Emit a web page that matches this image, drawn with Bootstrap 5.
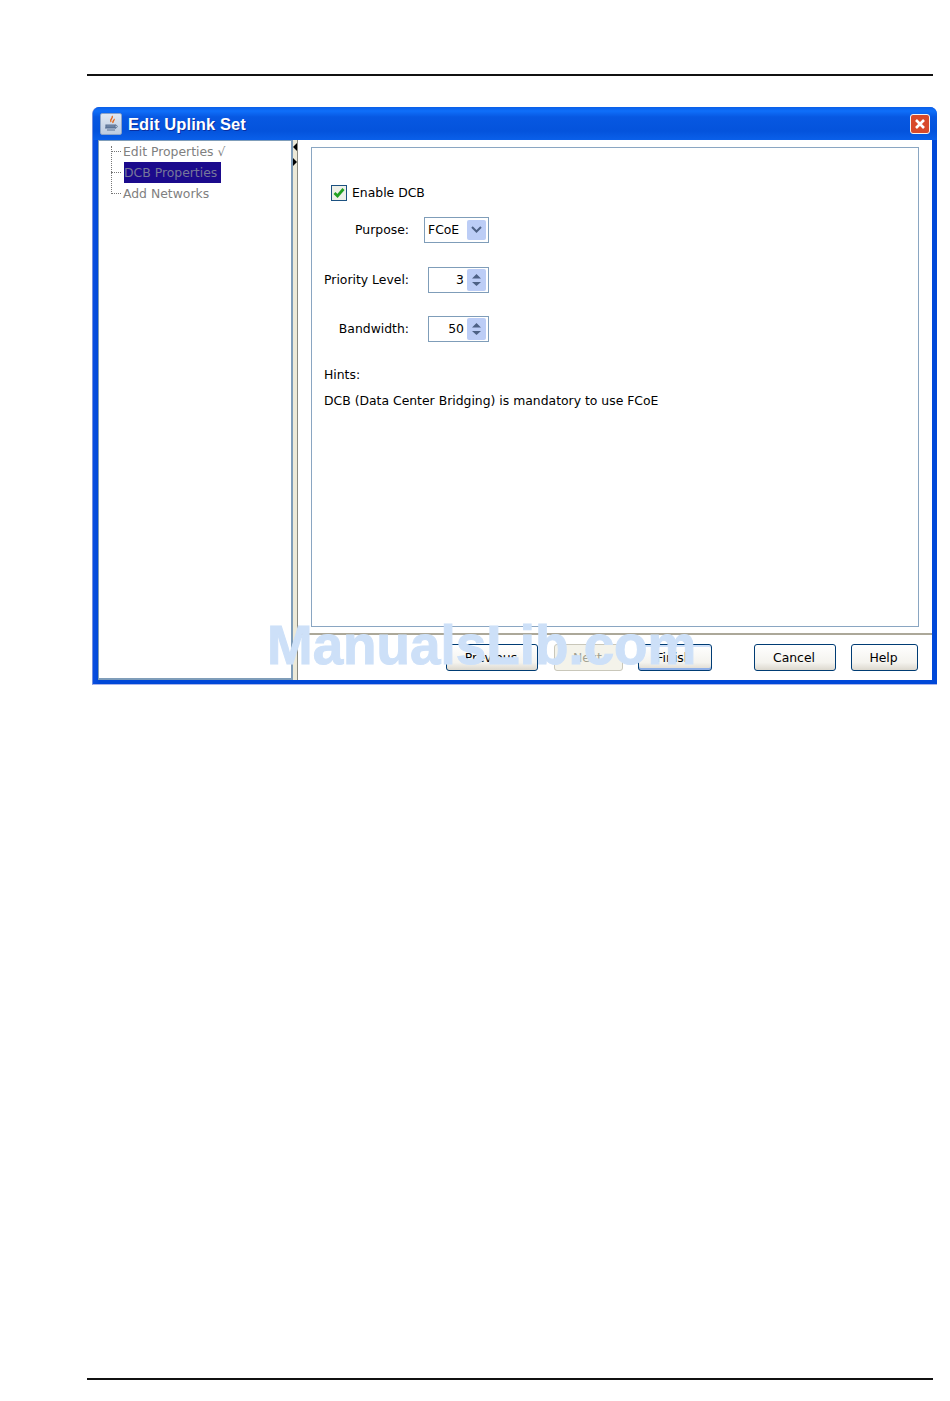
<!DOCTYPE html>
<html lang="en">
<head>
<meta charset="utf-8">
<title>Edit Uplink Set</title>
<link href="https://cdn.jsdelivr.net/npm/bootstrap@5.3.0/dist/css/bootstrap.min.css" rel="stylesheet">
<style>
html,body{margin:0;background:#fff;}
.sheet{width:950px;height:1401px;padding:74px 17px 0 87px;font-family:"DejaVu Sans",sans-serif;font-size:12.4px;color:#000;position:relative;overflow:hidden;}
.rule-line{height:2px;background:#111;width:846px;}
.rule-top{margin-bottom:31px;}
.rule-bottom{margin-top:693px;}
.xp-win{margin-left:5px;width:845px;height:578px;background:#0a50e0;border-radius:7px 7px 0 0;display:flex;flex-direction:column;border-bottom:1px solid #a9b4ea;border-left:1px solid #6f8fe0;}
.xp-title{height:33px;flex:none;background:linear-gradient(#0a5fe8 0,#0f6ffa 4px,#0758e2 10px,#0453dc 24px,#0a60ea 33px);border-radius:7px 7px 0 0;padding:1px 7px 0 7px;color:#fff;font-family:"Liberation Sans",sans-serif;font-weight:700;font-size:16.5px;letter-spacing:.1px;text-shadow:1px 1px 0 #0a2ea0;}
.title-icon{width:22px;height:22px;margin-right:6px;background:linear-gradient(#dfe8f2,#bccbe0);border:1px solid #8aa3c8;border-radius:2px;}
.title-text{padding-top:1px;}
.close-x{width:20px;height:20px;background:#d8492a;border:1px solid #f3f3f3;border-radius:3px;}
.xp-main{flex:1;min-height:0;padding:0 5px 4px 5px;background:linear-gradient(90deg,#0a4fe0,#0048d8 6px,#0048d8);}
.tree-pane{width:195px;background:#fff;border:solid #7f9db9;border-width:1px 2px 2px 1px;padding:0 0 0 12px;position:relative;color:#808080;}
.tree-row{height:21px;line-height:21px;white-space:nowrap;position:relative;padding-left:12px;}
.tree-row::before{content:"";position:absolute;left:0;top:10px;width:10px;border-top:1px dotted #777;}
.tree-stem{position:absolute;left:12px;top:5px;height:46px;border-left:1px dotted #777;}
.tree-sel{background:#1b0a8c;color:#77779a;display:inline-block;height:21px;line-height:21px;width:97px;margin-left:1px;vertical-align:top;}
.splitter{width:5px;background:#ece9d8;border-right:1px solid #8a8a80;position:relative;}
.tri-l{position:absolute;left:0;top:3px;width:0;height:0;border:4px solid transparent;border-left-width:0;border-right:4px solid #000;}
.tri-r{position:absolute;left:0;top:18px;width:0;height:0;border:4px solid transparent;border-right-width:0;border-left:4px solid #000;}
.right-pane{flex:1;background:#fff;display:flex;flex-direction:column;min-width:0;}
.content-wrap{height:493px;padding:7px 13px 6px 13px;flex:none;}
.group-box{height:480px;border:1px solid #8aa6c2;padding:37px 0 0 12px;}
.chk-row{height:16px;margin-left:7px;margin-bottom:16px;}
.chk-box{width:16px;height:16px;border:1px solid #1c5180;background:#eef0e8;margin-right:5px;}
.field-label{width:86px;text-align:right;margin-right:15px;flex:none;white-space:nowrap;}
.field-row{display:flex;align-items:center;height:26px;margin-left:-1px;}
.gap-a{margin-bottom:24px;}
.gap-b{margin-bottom:23px;}
.combo,.spin{height:26px;border:1px solid #7f9db9;background:#fff;display:flex;align-items:center;justify-content:space-between;padding:2px 2px 2px 3px;}
.combo{width:65px;}
.spin{width:61px;margin-left:4px;padding-left:0;}
.spin-val{flex:1;text-align:right;padding-right:3px;}
.arrow-cell{width:19px;height:20px;background:#bccdf6;border-radius:2px;display:flex;align-items:center;justify-content:center;}
.arrow-cell.tall{height:22px;}
.hint-a{margin:24px 0 0 0;line-height:18px;}
.hint-b{margin:8px 0 0 0;line-height:18px;white-space:nowrap;}
.divider-line{height:2px;background:#aca899;flex:none;}
.btn-bar{flex:1;padding:9px 14px 0 148px;}
.xp-btn{height:27px;padding:0 2px 0 0;font-family:"DejaVu Sans",sans-serif;font-size:12.4px;line-height:25px;color:#000;background:linear-gradient(#fff,#f4f3ee 70%,#dcd8ce);border:1px solid #003c74;border-radius:3px;}
.xp-btn.w-prev{width:92px;margin-right:16px;}
.xp-btn.w-next{width:69px;margin-right:15px;color:#a1a192;background:#f4f3ea;border-color:#c9c7ba;opacity:1;}
.xp-btn.w-fin{width:74px;margin-right:42px;box-shadow:inset 0 -2px 0 #8fb0e8,inset 0 2px 0 #cfe0f8;}
.xp-btn.w-can{width:82px;margin-right:15px;}
.xp-btn.w-help{width:67px;}
.stamp{position:absolute;left:267px;top:612px;font-family:"Liberation Sans",sans-serif;font-weight:700;font-size:54.8px;line-height:66px;color:#cde0f8;-webkit-text-stroke:1px #cde0f8;white-space:nowrap;}
</style>
</head>
<body>
<div class="sheet">
  <div class="rule-line rule-top"></div>
  <div class="xp-win">
    <div class="xp-title d-flex align-items-center">
      <span class="title-icon d-flex align-items-center justify-content-center">
        <svg width="19" height="19" viewBox="0 0 19 19"><path d="M10 1c2 2-3 3-1 6M12 4c1 1-2 2-1 4" fill="none" stroke="#e2661a" stroke-width="1.4"/><path d="M4 10h9v2H4zM3 13h11M5 15h8" stroke="#5a7396" stroke-width="1.2" fill="#7c90ad"/><path d="M13 10c3 0 3 3 0 3" fill="none" stroke="#5a7396"/></svg>
      </span>
      <span class="flex-grow-1 title-text">Edit Uplink Set</span>
      <span class="close-x d-flex align-items-center justify-content-center">
        <svg width="12" height="12" viewBox="0 0 12 12"><path d="M2 2l8 8M10 2l-8 8" stroke="#fff" stroke-width="2.6"/></svg>
      </span>
    </div>
    <div class="xp-main d-flex">
      <div class="tree-pane">
        <div class="tree-stem"></div>
        <div class="tree-row">Edit Properties √</div>
        <div class="tree-row"><span class="tree-sel">DCB Properties</span></div>
        <div class="tree-row">Add Networks</div>
      </div>
      <div class="splitter"><span class="tri-l"></span><span class="tri-r"></span></div>
      <div class="right-pane">
        <div class="content-wrap">
          <div class="group-box">
            <div class="chk-row d-flex align-items-center">
              <span class="chk-box d-flex align-items-center justify-content-center">
                <svg width="12" height="12" viewBox="0 0 12 12"><path d="M1.500 6l3 3 6-7" fill="none" stroke="#21a121" stroke-width="2.8"/></svg>
              </span>
              <span>Enable DCB</span>
            </div>
            <div class="field-row gap-a">
              <span class="field-label">Purpose:</span>
              <div class="combo"><span>FCoE</span>
                <span class="arrow-cell"><svg width="11" height="8" viewBox="0 0 11 8"><path d="M1 1l4.500 4.500L10 1" fill="none" stroke="#4d6185" stroke-width="2"/></svg></span>
              </div>
            </div>
            <div class="field-row gap-b">
              <span class="field-label">Priority Level:</span>
              <div class="spin"><span class="spin-val">3</span>
                <span class="arrow-cell tall"><svg width="11" height="16" viewBox="0 0 11 16"><path d="M5.500 2L10 6.500H1zM1 10h9l-4.500 4z" fill="#4d6185"/></svg></span>
              </div>
            </div>
            <div class="field-row">
              <span class="field-label">Bandwidth:</span>
              <div class="spin"><span class="spin-val">50</span>
                <span class="arrow-cell tall"><svg width="11" height="16" viewBox="0 0 11 16"><path d="M5.500 2L10 6.500H1zM1 10h9l-4.500 4z" fill="#4d6185"/></svg></span>
              </div>
            </div>
            <p class="hint-a">Hints:</p>
            <p class="hint-b">DCB (Data Center Bridging) is mandatory to use FCoE</p>
          </div>
        </div>
        <div class="divider-line"></div>
        <div class="btn-bar d-flex align-items-start">
          <button type="button" class="btn xp-btn w-prev">Previous</button>
          <button type="button" class="btn xp-btn w-next">Next</button>
          <button type="button" class="btn xp-btn w-fin">Finish</button>
          <button type="button" class="btn xp-btn w-can">Cancel</button>
          <button type="button" class="btn xp-btn w-help">Help</button>
        </div>
      </div>
    </div>
  </div>
  <div class="rule-line rule-bottom"></div>
  <div class="stamp">ManualsLib.com</div>
</div>
</body>
</html>
